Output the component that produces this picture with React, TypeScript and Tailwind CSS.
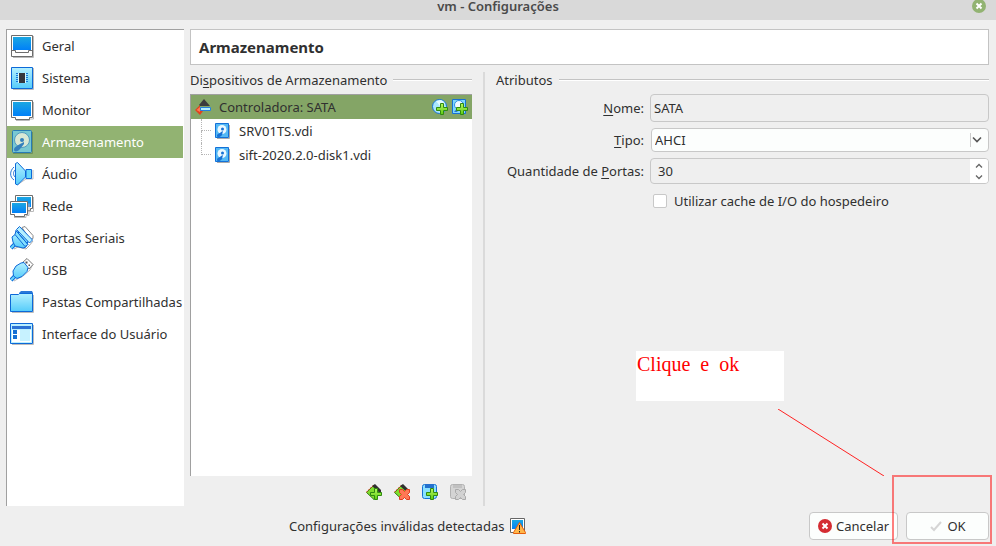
import type { ReactNode } from "react";

function Gradients() {
  return (
    <svg className="absolute size-0" aria-hidden="true">
      <defs>
        <linearGradient id="screen" x1="0" y1="0" x2="0" y2="1">
          <stop offset="0" stopColor="#1ba7e2" />
          <stop offset="1" stopColor="#0080f8" />
        </linearGradient>
        <linearGradient id="sky" x1="0" y1="0" x2="0" y2="1">
          <stop offset="0" stopColor="#b4f0ff" />
          <stop offset="1" stopColor="#55ccfa" />
        </linearGradient>
        <linearGradient id="lime" x1="0" y1="0" x2="0" y2="1">
          <stop offset="0" stopColor="#b8f860" />
          <stop offset="1" stopColor="#5ccc10" />
        </linearGradient>
      </defs>
    </svg>
  );
}

function Icon24({ children }: { children: ReactNode }) {
  return (
    <svg viewBox="0 0 24 24" className="size-6 shrink-0" fill="none" aria-hidden="true">
      {children}
    </svg>
  );
}

function Icon16({ children }: { children: ReactNode }) {
  return (
    <svg viewBox="0 0 16 16" className="size-4 shrink-0" fill="none" aria-hidden="true">
      {children}
    </svg>
  );
}

const GeneralIcon = () => (
  <Icon24>
    <path d="M3 23.5h20.5V2" stroke="#bbb" />
    <path d="M1.5 1.5h21v21h-21z" fill="#fff" stroke="#6d6d6d" />
    <path d="M3 3h18v13H3z" fill="url(#screen)" />
    <path d="M1.5 16.5h4v2h13v-2h4" stroke="#6d6d6d" />
  </Icon24>
);

const SystemIcon = () => (
  <Icon24>
    <path d="M3 23.5h20.5V2" stroke="#bbb" />
    <path d="M1.5 1.5h21v21h-21z" fill="url(#sky)" stroke="#0d69d8" />
    <path d="M6 7.5h12M6 9.5h12M6 11.5h12M6 13.5h12M6 15.5h12" stroke="#1778dc" />
    <path d="M8 7h8v10H8z" fill="#d9f8ff" />
    <path d="M9 7h6v10H9z" fill="#35373d" />
  </Icon24>
);

const DisplayIcon = () => (
  <Icon24>
    <path d="M6 22.500h13.500v-1.500h4V4" stroke="#bbb" />
    <path d="M1.500 2.500h21v17h-3v2h-14v-2h-4z" fill="#fff" stroke="#6d6d6d" />
    <path d="M3 4h18v14H3z" fill="url(#screen)" />
  </Icon24>
);

const StorageIcon = () => (
  <Icon24>
    <rect x="2.500" y=".5" width="19" height="22" rx="1" fill="#78c8d2" stroke="#287bb5" />
    <path d="M3 23.500h19.500V2" stroke="#6f925c" />
    <circle cx="12" cy="10" r="7.500" fill="#d9e8d5" stroke="#529bc0" />
    <path d="M4 20c0-3 3-4 6-6l4-2v2l-4 5c-2 3-6 3-6 1z" fill="#3480bd" />
    <circle cx="12" cy="10" r="2" fill="#3480bd" />
  </Icon24>
);

const AudioIcon = () => (
  <Icon24>
    <path d="M4 5C-.5 9-.5 15 4 18M5 8c-2 2-2 5 0 7" stroke="#2475d4" />
    <path d="M7 23l9-6h7V8" stroke="#bbb" />
    <path d="M16 7.500h5.500v9H16z" fill="#67d8fa" stroke="#0d69d8" />
    <path d="M5.500 1.500l2-1L15.500 9v6l-8 8-2-1z" fill="url(#sky)" stroke="#0d69d8" />
  </Icon24>
);

const NetworkIcon = () => (
  <Icon24>
    <path d="M8 17.500h15.500V3" stroke="#bbb" />
    <path d="M5.500 1.500h17v13h-2v2h-13v-2h-2z" fill="#fff" stroke="#6d6d6d" />
    <path d="M7 3h14v10H7z" fill="url(#screen)" />
    <path d="M4 23.500h12v-2h3v-12" stroke="#bbb" />
    <path d="M.5 7.500h17v13h-3v2h-10v-2h-4z" fill="#fff" stroke="#6d6d6d" />
    <path d="M2 9h14v10H2z" fill="url(#screen)" />
  </Icon24>
);

const SerialIcon = () => (
  <Icon24>
    <path d="M12 1.500l3-1 8 9v3l-3 1z" fill="#fff" stroke="#888" />
    <path d="M4 23l4-2 8 2 3-3 4-5" stroke="#aaa" />
    <path d="M1 22l4-4" stroke="#0d69d8" strokeWidth="4" />
    <path d="M1 22l4-4" stroke="#66d4fb" strokeWidth="2" />
    <path d="M2 11l5-4 3-1 8 9-2 6-3 1-8-2-2-4z" fill="url(#sky)" stroke="#0d69d8" />
    <path d="M6 4.500l12 14M6 4.500l-1 4 10 12 3-2z" fill="#83dfff" stroke="#0d69d8" />
    <path d="M6.500 3.500l3-3 13 13.500-3 3z" fill="#b4efff" stroke="#0d69d8" />
  </Icon24>
);

const UsbIcon = () => (
  <Icon24>
    <path d="M4 23l9-5 7-6 3-6" stroke="#bbb" />
    <path d="M12 5l5-4.500 6 6-4 4.500z" fill="#fff" stroke="#777" />
    <path d="M15.500 3.500h2v2h-2zM18.500 6.500h1.500v1.500h-1.500z" fill="#555" />
    <path d="M1 22l4-4" stroke="#0d69d8" strokeWidth="4" />
    <path d="M1 22l4-4" stroke="#66d4fb" strokeWidth="2" />
    <path d="M3.500 18l-.5-5 3-5 5-3 3-.5 4 5-1 4-5 5-5 2z" fill="url(#sky)" stroke="#0d69d8" />
  </Icon24>
);

const FolderIcon = () => (
  <Icon24>
    <path d="M9 5V3l2-2h11l1 2v4z" fill="#2b78d8" />
    <path d="M2 22.500h21.500V5" stroke="#bbb" />
    <path d="M.5 4.500h8l1-1h13v18H.5z" fill="url(#sky)" stroke="#0d69d8" />
  </Icon24>
);

const InterfaceIcon = () => (
  <Icon24>
    <path d="M2 22.500h21.500V3" stroke="#bbb" />
    <path d="M.5 1.500h22v20H.5z" fill="#fff" stroke="#0d69d8" />
    <path d="M1 2h21v19H1z" fill="#b9efff" />
    <path d="M2 4h19v3H2z" fill="#2b72d4" />
    <path d="M2 8h19v12H2z" fill="#fff" />
    <path d="M3 8h4v4H3zM3 13h4v4H3z" fill="#1770d4" />
    <path d="M10 8h10v11H10z" fill="#c7f2ff" />
  </Icon24>
);

const Plus = () => (
  <path d="M8.500 4.500h3v4h4v3h-4v4h-3v-4h-4v-3h4z" fill="url(#lime)" stroke="#2f8a10" />
);

const ControllerIcon = () => (
  <Icon16>
    <path d="M4 6l5-6 6 7H5z" fill="#3b3b3b" />
    <path d="M0 11l5-5v3h3v3l-3 4z" fill="#e2401c" />
    <path d="M1.500 11L5 8v5z" fill="#ff7954" />
    <path d="M5.500 8.500h10v3h-10z" fill="#b5efff" stroke="#2580dc" />
  </Icon16>
);

const AddOpticalIcon = () => (
  <Icon16>
    <circle cx="7.500" cy="7.500" r="7" fill="#a8e6fc" stroke="#1771d5" />
    <path d="M4 2l4 5 5-2a7 7 0 0 0-4-4z" fill="#e1faff" />
    <Plus />
  </Icon16>
);

const AddDiskIcon = () => (
  <Icon16>
    <path d="M.5.5h13v14H.5z" fill="#7ed8fb" stroke="#1771d5" />
    <circle cx="7" cy="6" r="4.500" fill="#effaff" stroke="#2d8ee0" />
    <path d="M2 13l4-5h3l-4 5z" fill="#2577d5" />
    <Plus />
  </Icon16>
);

const DiskIcon = () => (
  <Icon16>
    <path d="M2 15.500h12.500V2" stroke="#aaa" />
    <path d="M.5.5h13v14H.5z" fill="#54b9f5" stroke="#1371d8" />
    <circle cx="7" cy="6.500" r="4.500" fill="#eaf8ff" />
    <path d="M2 13c0-3 3-2 4-4l2-1-1 4c-1 2-5 3-5 1z" fill="#1771d5" />
    <circle cx="7.500" cy="6" r="1.500" fill="#1771d5" />
  </Icon16>
);

const Cross = ({ grey = false }: { grey?: boolean }) => (
  <path
    d="M5.500 5.500h3l2 2 2-2h3v3l-2 2 2 2v3h-3l-2-2-2 2h-3v-3l2-2-2-2z"
    fill={grey ? "#d2d2d2" : "#ff7855"}
    stroke={grey ? "#aaa" : "#df3c20"}
  />
);

const CardBase = () => (
  <>
    <path d="M.5 8.500l7-7 7.500 7-7 7z" fill="#7fdd2d" stroke="#387e1c" />
    <path d="M6 2l3-2 6 6v4z" fill="#303030" />
    <path d="M0 8.500l7-7" stroke="#e74422" strokeDasharray="2 1" />
  </>
);

const AddControllerIcon = () => (
  <Icon16>
    <CardBase />
    <Plus />
  </Icon16>
);
const RemoveControllerIcon = () => (
  <Icon16>
    <CardBase />
    <Cross />
  </Icon16>
);
const AddAttachmentIcon = () => (
  <Icon16>
    <rect x=".5" y=".5" width="14" height="14" rx="2" fill="#8be1ff" stroke="#1771d5" />
    <path d="M3 0h9v4H3z" fill="#2470ce" />
    <Plus />
  </Icon16>
);
const RemoveAttachmentIcon = () => (
  <Icon16>
    <rect x=".5" y=".5" width="14" height="14" rx="2" fill="#d4d4d4" stroke="#b2b2b2" />
    <path d="M3 1h9v3H3z" fill="#c1c1c1" />
    <Cross grey />
  </Icon16>
);

const WarningIcon = () => (
  <Icon16>
    <path d="M.5.5h14v14H.5z" fill="#fff" stroke="#666" />
    <path d="M2 2h11v9H2z" fill="url(#screen)" />
    <path d="M9.500 4.500l6 10v1h-12v-1z" fill="#ffb74a" stroke="#e65d0c" />
    <path d="M9.500 7v5M9.500 13v1.500" stroke="#222" />
  </Icon16>
);

const sections = [
  { label: "Geral", Icon: GeneralIcon },
  { label: "Sistema", Icon: SystemIcon },
  { label: "Monitor", Icon: DisplayIcon },
  { label: "Armazenamento", Icon: StorageIcon, active: true },
  { label: "Áudio", Icon: AudioIcon },
  { label: "Rede", Icon: NetworkIcon },
  { label: "Portas Seriais", Icon: SerialIcon },
  { label: "USB", Icon: UsbIcon },
  { label: "Pastas Compartilhadas", Icon: FolderIcon },
  { label: "Interface do Usuário", Icon: InterfaceIcon },
];

const disks = ["SRV01TS.vdi", "sift-2020.2.0-disk1.vdi"];

const tools = [
  { label: "Adicionar controladora", Icon: AddControllerIcon },
  { label: "Remover controladora", Icon: RemoveControllerIcon },
  { label: "Adicionar disco", Icon: AddAttachmentIcon },
  { label: "Remover disco", Icon: RemoveAttachmentIcon, disabled: true },
];

function Mnemonic({ children }: { children: ReactNode }) {
  return <span className="underline underline-offset-2">{children}</span>;
}

function GroupTitle({ children }: { children: ReactNode }) {
  return (
    <h2 className="flex h-4 items-center gap-1.5 whitespace-nowrap">
      <span>{children}</span>
      <span className="h-[2px] flex-1 border-t border-[#c3c3c3] bg-white" />
    </h2>
  );
}

function Sidebar() {
  return (
    <nav className="w-[178px] shrink-0 border-t border-l border-[#a0a0a0] bg-white">
      {sections.map(({ label, Icon, active }) => (
        <button
          key={label}
          type="button"
          className={
            active
              ? "flex h-8 w-[176px] items-center gap-2 bg-[#92b372] pl-[3px] text-left whitespace-nowrap text-white"
              : "flex h-8 w-[176px] items-center gap-2 pl-[3px] text-left whitespace-nowrap"
          }
        >
          <Icon />
          {label}
        </button>
      ))}
    </nav>
  );
}

function Devices() {
  return (
    <section className="flex w-[282px] shrink-0 flex-col">
      <GroupTitle>
        Di<Mnemonic>s</Mnemonic>positivos de Armazenamento
      </GroupTitle>
      <div className="mt-1.5 flex-1 border-t border-l border-[#a0a0a0] bg-white">
        <div className="flex h-6 items-center bg-[#84a566] pl-1">
          <ControllerIcon />
          <span className="flex-1 pl-2">Controladora: SATA</span>
          <button type="button" aria-label="Adicionar unidade óptica">
            <AddOpticalIcon />
          </button>
          <button type="button" aria-label="Adicionar disco rígido" className="mr-1 ml-1">
            <AddDiskIcon />
          </button>
        </div>
        <ul>
          {disks.map((disk, i) => (
            <li key={disk} className="flex h-6 items-center pl-2.5">
              <span className="flex h-6 w-3.5 shrink-0 flex-col pr-1">
                <span className="h-3 border-b border-l border-dotted border-[#b5b5b5]" />
                {i < disks.length - 1 && <span className="h-3 border-l border-dotted border-[#b5b5b5]" />}
              </span>
              <DiskIcon />
              <span className="pl-2">{disk}</span>
            </li>
          ))}
        </ul>
      </div>
      <div className="flex h-[30px] items-center justify-end gap-3 pt-0.5 pr-1.5">
        {tools.map(({ label, Icon, disabled }) => (
          <button key={label} type="button" aria-label={label} disabled={disabled}>
            <Icon />
          </button>
        ))}
      </div>
    </section>
  );
}

function Attributes() {
  return (
    <section className="min-w-0 flex-1">
      <GroupTitle>Atributos</GroupTitle>
      <div className="mt-1.5 grid grid-cols-[148px_1fr] items-center gap-x-1.5 gap-y-1.5">
        <label htmlFor="name" className="text-right">
          <Mnemonic>N</Mnemonic>ome:
        </label>
        <input
          id="name"
          defaultValue="SATA"
          className="h-7 w-full min-w-0 rounded border border-[#c8c8c8] bg-transparent px-[3px] outline-none"
        />

        <label htmlFor="type" className="text-right">
          <Mnemonic>T</Mnemonic>ipo:
        </label>
        <div className="ml-px grid h-6 grid-cols-[1fr_18px] items-center rounded-sm border border-[#c8c8c8] bg-[#fcfefd]">
          <select
            id="type"
            className="col-span-2 col-start-1 row-start-1 h-full w-full appearance-none bg-transparent pl-[3px] outline-none"
          >
            <option>AHCI</option>
          </select>
          <svg
            viewBox="0 0 18 14"
            className="pointer-events-none col-start-2 row-start-1 h-3.5 w-[18px]"
            fill="none"
            aria-hidden="true"
          >
            <path d="M.5 0v14" stroke="#ccc" />
            <path d="M3 4.500l4 4 4-4" stroke="#555" strokeWidth="1.600" />
          </svg>
        </div>

        <label htmlFor="ports" className="text-right">
          Quantidade de <Mnemonic>P</Mnemonic>ortas:
        </label>
        <div className="flex h-[26px] overflow-hidden rounded border border-[#c8c8c8]">
          <input
            id="ports"
            inputMode="numeric"
            defaultValue="30"
            className="w-full min-w-0 flex-1 bg-transparent pl-[7px] outline-none"
          />
          <div className="flex w-[18px] flex-col bg-white">
            <button type="button" aria-label="Aumentar" className="flex flex-1 items-center justify-center">
              <svg viewBox="0 0 8 5" className="h-[5px] w-2" fill="none">
                <path d="M1 4.500l3-3 3 3" stroke="#666" strokeWidth="1.300" />
              </svg>
            </button>
            <button type="button" aria-label="Diminuir" className="flex flex-1 items-center justify-center">
              <svg viewBox="0 0 8 5" className="h-[5px] w-2" fill="none">
                <path d="M1 .5l3 3 3-3" stroke="#666" strokeWidth="1.300" />
              </svg>
            </button>
          </div>
        </div>

        <label className="col-start-2 ml-[3px] flex h-[22px] items-center gap-[7px] whitespace-nowrap">
          <input
            type="checkbox"
            className="size-3.5 shrink-0 appearance-none rounded-xs border border-[#c8c8c8] bg-white checked:bg-[#92b372]"
          />
          Utilizar cache de I/O do hospedeiro
        </label>
      </div>
    </section>
  );
}

function Footer() {
  return (
    <footer className="flex h-10 shrink-0 items-center pr-[7px] pl-[289px]">
      <p className="flex flex-1 items-center gap-1.5 whitespace-nowrap">
        Configurações inválidas detectadas
        <WarningIcon />
      </p>
      <button
        type="button"
        className="flex h-7 w-[89px] items-center justify-center gap-1 rounded-sm border border-[#c8c8c8] bg-[#fcfefd]"
      >
        <svg viewBox="0 0 14 14" className="size-3.5" fill="none" aria-hidden="true">
          <circle cx="7" cy="7" r="7" fill="#d42c32" />
          <path d="M4.500 4.500l5 5m0-5l-5 5" stroke="#fff" strokeWidth="2" />
        </svg>
        Cancelar
      </button>
      <button
        type="button"
        className="ml-2 flex h-7 w-[83px] items-center justify-center gap-1 rounded-sm border border-[#c8c8c8] bg-[#fcfefd]"
      >
        <svg viewBox="0 0 14 14" className="size-3.5" fill="none" aria-hidden="true">
          <path d="M2 8l3 3 7-8" stroke="#d5d5d5" strokeWidth="2" />
        </svg>
        OK
      </button>
    </footer>
  );
}

function Annotations() {
  return (
    <>
      <p className="absolute right-[212px] bottom-[145px] h-[50px] w-[148px] bg-white pl-px font-['Liberation_Serif',serif] text-[20px] leading-[26px] whitespace-pre text-[#f00]">
        {"Clique  e  ok"}
      </p>
      <svg
        viewBox="0 0 106 67"
        className="pointer-events-none absolute right-[112px] bottom-[70px] h-[67px] w-[106px]"
        aria-hidden="true"
      >
        <path d="M0 0l106 67" stroke="#f22" />
      </svg>
      <div className="pointer-events-none absolute right-1 bottom-0.5 h-[69px] w-[100px] border-2 border-[#ff0000]/50" />
    </>
  );
}

export default function App() {
  return (
    <div className="relative flex min-h-screen flex-col bg-[#efefef] font-['Noto_Sans',sans-serif] text-[13px] leading-4 text-[#303030]">
      <Gradients />
      <header className="grid h-5 shrink-0 grid-cols-[1fr_auto_1fr] bg-[#d9d9d9]">
        <h1 className="col-start-2 leading-3 font-semibold text-[#4a4a4a]">vm - Configurações</h1>
        <button type="button" aria-label="Fechar" className="mr-2.5 -mt-px size-3.5 justify-self-end">
          <svg viewBox="0 0 14 14" fill="none">
            <circle cx="7" cy="7" r="7" fill="#92b372" />
            <path d="M4.500 4.500l5 5m0-5l-5 5" stroke="#fff" strokeWidth="2" />
          </svg>
        </button>
      </header>
      <main className="flex flex-1 gap-1.5 pt-[9px] pr-[7px] pl-1.5">
        <Sidebar />
        <div className="flex min-w-0 flex-1 flex-col">
          <div className="flex h-9 shrink-0 items-center border border-[#c3c3c3] bg-white pl-2 text-[15px] font-bold">
            Armazenamento
          </div>
          <div className="flex flex-1 pt-[7px]">
            <Devices />
            <div className="mx-[11px] w-0.5 bg-[#dadada]" />
            <Attributes />
          </div>
        </div>
      </main>
      <Footer />
      <Annotations />
    </div>
  );
}
